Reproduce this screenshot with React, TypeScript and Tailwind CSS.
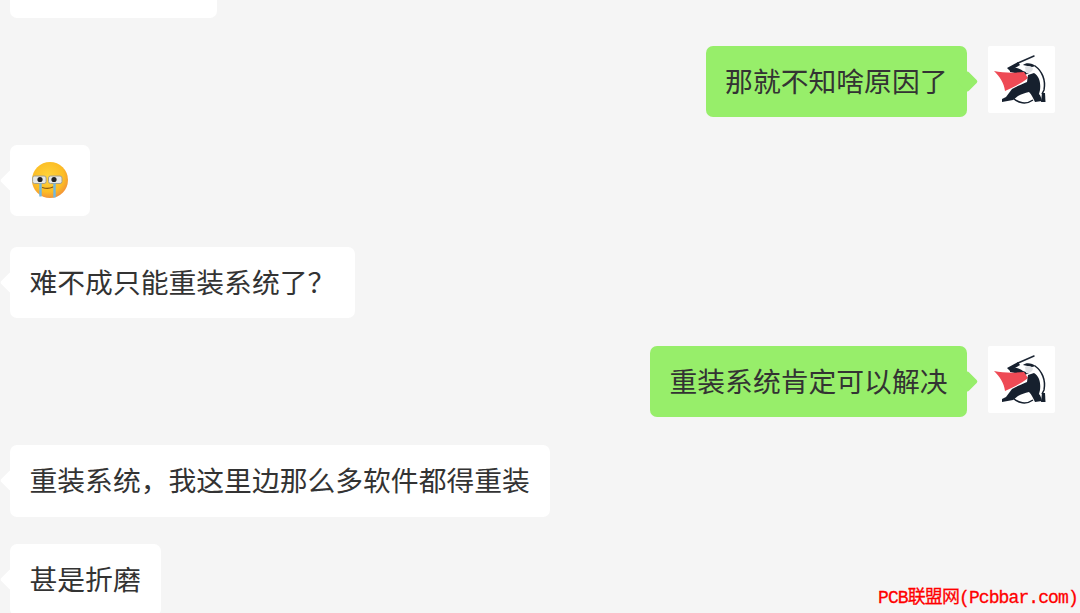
import React from 'react'

const Avatar = () => (
  <div className="w-[67px] h-[67px] bg-white rounded-[2px] ml-[21px] shrink-0">
    <svg viewBox="0 0 67 67" width="67" height="67">
      {/* sword */}
      <path d="M30 17 L46 10" stroke="#1c2634" strokeWidth="1.500" strokeLinecap="round" />
      <path d="M19 22 L30 16 L32 19 L22 25 Z" fill="#16202e" />
      {/* arm and helmet */}
      <path d="M22 23 C28 21 31 22 35 25 L41 27 L37 29 C31 28 26 27 22 26 Z" fill="#16202e" />
      <path d="M35 19 C38 16 44 17 48 20 L44 21 C41 20 38 20 35 19 Z" fill="#16202e" />
      <path d="M37 21 C40 19 44 20 45 23 C44 26 41 28 38 27 Z" fill="#dfe1e4" />
      {/* cape */}
      <path d="M6 25 C15 27 27 27 36 26 L40 32 C33 38 25 41 17 45 C16 37 12 31 6 25 Z" fill="#ee4a55" />
      {/* torso and legs */}
      <path d="M40 29 L46 27 C51 30 53 36 52 44 L51 48 C53 50 53 52 54 55 L47 56 C45 52 44 49 41 46 C37 47 33 48 30 50 L25 54 L14 56 L14 53 L18 51 L24 43 C29 40 35 38 39 36 Z" fill="#16202e" />
      <path d="M54 47 L57 47 L57.500 56 L53 56 Z" fill="#16202e" />
      {/* ring */}
      <path d="M47 20 C54 25 58 34 56 44 L54 48" fill="none" stroke="#16202e" strokeWidth="1.500" />
      <path d="M25 52 C30 57 38 59 45 54" fill="none" stroke="#16202e" strokeWidth="1.500" />
    </svg>
  </div>
)

const CryEmoji = () => (
  <svg viewBox="0 0 36 36" width="36" height="36">
    <defs>
      <radialGradient id="face" cx="45%" cy="40%" r="62%">
        <stop offset="0%" stopColor="#ffd43a" />
        <stop offset="70%" stopColor="#fcbd25" />
        <stop offset="100%" stopColor="#f2913a" />
      </radialGradient>
    </defs>
    <circle cx="18" cy="18" r="18" fill="url(#face)" />
    <path d="M10.500 25.500 Q16 27.500 21 25" fill="none" stroke="#8a5a10" strokeWidth="1.200" strokeLinecap="round" />
    <rect x="0.600" y="14" width="13.500" height="7.500" rx="2" fill="#e6e8e6" stroke="#a5a08c" strokeWidth="1" />
    <rect x="16.500" y="14" width="13.500" height="7.500" rx="2" fill="#e6e8e6" stroke="#a5a08c" strokeWidth="1" />
    <circle cx="8" cy="17.500" r="2.600" fill="#222" />
    <circle cx="22" cy="17.500" r="2.600" fill="#222" />
    <path d="M8.500 21.500 L8.500 34.500" stroke="#6fb8e4" strokeWidth="2.400" />
    <path d="M22.500 21.500 L22.500 35.500" stroke="#6fb8e4" strokeWidth="2.400" />
  </svg>
)

const Left = ({ children, className = '' }: { children: React.ReactNode; className?: string }) => (
  <div className={`relative self-start bg-white rounded-[7px] h-[71.5px] pl-[19.5px] pr-[20px] pb-[3px] flex items-center shrink-0 ${className}`}>
    <div className="absolute left-[-7.500px] top-[28px] w-[15px] h-[15px] bg-white rotate-45 rounded-[2px]" />
    <span className="relative">{children}</span>
  </div>
)

const Right = ({ children }: { children: React.ReactNode }) => (
  <div className="flex self-end items-start shrink-0 h-[71.5px]">
    <div className="relative bg-[#97ee6a] rounded-[7px] h-[71.5px] px-[19.5px] pb-[3px] flex items-center">
      <div className="absolute right-[-7.500px] top-[28px] w-[15px] h-[15px] bg-[#97ee6a] rotate-45 rounded-[2px]" />
      <span className="relative">{children}</span>
    </div>
    <Avatar />
  </div>
)

export default function App() {
  return (
    <div className="relative w-[1080px] h-[613px] overflow-hidden bg-[#f5f5f5] font-['Noto_Sans_CJK_SC',sans-serif] text-[27.800px] leading-[40px] text-[#333333]">
      <div className="flex flex-col gap-[27.700px] pl-[10px] pr-[25px] mt-[-53.500px]">
        <div className="self-start w-[207px] h-[71.500px] bg-white rounded-[7px] shrink-0" />
        <Right>那就不知啥原因了</Right>
        <Left className="!pl-[22px] !pr-[21.500px] !pb-[2px]"><CryEmoji /></Left>
        <Left className="mt-[2.600px]">难不成只能重装系统了？</Left>
        <Right>重装系统肯定可以解决</Right>
        <Left>重装系统，我这里边那么多软件都得重装</Left>
        <Left>甚是折磨</Left>
      </div>
      <div className="absolute left-[878px] top-[587px] font-['Liberation_Mono','Noto_Sans_CJK_SC',monospace] text-[18px] tracking-[-0.900px] leading-[22px] text-[#ff0000] [-webkit-text-stroke:0.3px_#ff0000] whitespace-nowrap">
        PCB联盟网(Pcbbar.com)
      </div>
    </div>
  )
}
